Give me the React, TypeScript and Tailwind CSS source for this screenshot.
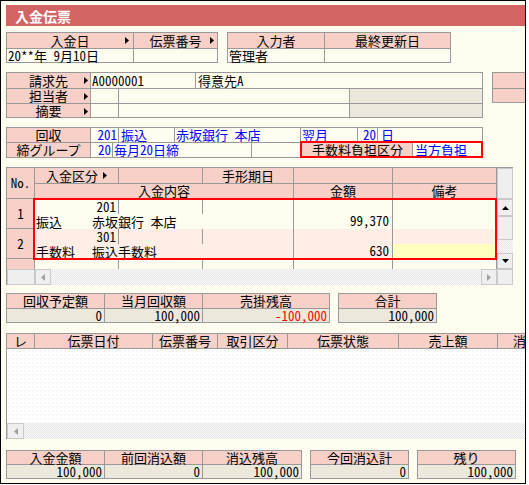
import React from "react";

type Kids = { children?: React.ReactNode };

// small solid triangle used for the dropdown markers and scrollbar buttons
function Tri({
  dir = "right",
  color = "#000000",
  className = "",
}: {
  dir?: "right" | "left" | "up" | "down";
  color?: string;
  className?: string;
}) {
  const horiz = dir === "right" || dir === "left";
  const w = horiz ? 4 : 7;
  const h = horiz ? 7 : 4;
  const d =
    dir === "right"
      ? "M0 0L4 3.5L0 7Z"
      : dir === "left"
      ? "M4 0L0 3.5L4 7Z"
      : dir === "up"
      ? "M0 4L3.5 0L7 4Z"
      : "M0 0L7 0L3.5 4Z";
  return (
    <svg width={w} height={h} viewBox={`0 0 ${w} ${h}`} className={className}>
      <path d={d} fill={color} />
    </svg>
  );
}

// grid cell: draws its own right and bottom rule, the group box draws left/top
function C({ className = "", children }: { className?: string } & Kids) {
  return (
    <div
      className={`flex shrink-0 items-center whitespace-nowrap border-r border-b border-[#999999] ${className}`}
    >
      {children}
    </div>
  );
}

function Label({ h, arrow, children }: { h: string; arrow?: boolean } & Kids) {
  return (
    <C className={`relative w-[84px] justify-center bg-[#F7D0C8] ${h}`}>
      {children}
      {arrow && <Tri className="absolute right-[2px] top-[4px]" />}
    </C>
  );
}

function Btn({ className = "", children }: { className?: string } & Kids) {
  return (
    <div
      className={`flex shrink-0 items-center justify-center border border-[#C9C9C9] bg-[#EFEFEF] ${className}`}
    >
      {children}
    </div>
  );
}

const track =
  "bg-[repeating-conic-gradient(#E6E6E6_0_25%,#FAFAFA_0_50%)] bg-[length:2px_2px]";

function SlipRow({
  no,
  code,
  kind,
  content,
  amount,
  tint,
  memo,
}: {
  no: string;
  code: string;
  kind: string;
  content: string;
  amount: string;
  tint: string;
  memo: string;
}) {
  return (
    <div className="flex h-[30px]">
      <div className="flex w-[28px] shrink-0 items-center justify-center border-r border-b border-[#999999] bg-[#F7D0C8]">
        {no}
      </div>
      <div className={`flex w-[259px] shrink-0 flex-col border-r border-[#999999] ${tint}`}>
        <div className="flex h-[15px]">
          <div className="flex w-[84px] items-center justify-end border-r border-[#999999] pr-[2px]">
            {code}
          </div>
          <div className="w-[84px] border-r border-[#999999]" />
        </div>
        <div className="flex h-[15px] items-center whitespace-nowrap pl-[1px]">
          <span className="w-[56px] shrink-0">{kind}</span>
          <span>{content}</span>
        </div>
      </div>
      <div
        className={`flex w-[99px] shrink-0 items-end justify-end border-r border-[#999999] pr-[3px] pb-[1px] ${tint}`}
      >
        {amount}
      </div>
      <div className={`flex w-[104px] shrink-0 flex-col border-r border-[#999999] ${tint}`}>
        <div className="h-[15px]" />
        <div className={`h-[15px] ${memo}`} />
      </div>
    </div>
  );
}

type Col = { label: string; value: string; w: string; red?: boolean };

function SumBox({ cols, hh }: { cols: Col[]; hh: string }) {
  return (
    <div className="flex shrink-0 flex-col border-l border-t border-[#999999]">
      <div className="flex">
        {cols.map((c) => (
          <C key={c.label} className={`${c.w} ${hh} justify-center bg-[#F7D0C8]`}>
            {c.label}
          </C>
        ))}
      </div>
      <div className="flex">
        {cols.map((c) => (
          <C
            key={c.label}
            className={`${c.w} h-[14px] justify-end bg-[#ECE9DC] pr-[2px] ${
              c.red ? "text-[#FF0000]" : ""
            }`}
          >
            {c.value}
          </C>
        ))}
      </div>
    </div>
  );
}

export default function App() {
  return (
    <div className="h-[485px] w-[529px] bg-white">
      <div className="h-[484px] w-[526px] overflow-hidden border border-black bg-[#FFFCF0] font-['Noto_Sans_CJK_JP',sans-serif] text-[13px] leading-[14px] text-black [font-feature-settings:'hwid']">
        <div className="flex flex-col pl-[5px] pt-[4px]">
          {/* title bar */}
          <div className="flex h-[21px] items-center bg-[#D36464] pl-[9px] text-[14px] font-bold text-white">
            入金伝票
          </div>

          {/* date / slip number / operator */}
          <div className="mt-[6px] flex">
            <div className="flex flex-col border-l border-t border-[#999999]">
              <div className="flex">
                <C className="relative h-[16px] w-[127px] justify-center bg-[#F7D0C8]">
                  入金日
                  <Tri className="absolute right-[4px] top-[4px]" />
                </C>
                <C className="relative h-[16px] w-[84px] justify-center bg-[#F7D0C8]">
                  伝票番号
                  <Tri className="absolute right-[3px] top-[4px]" />
                </C>
              </div>
              <div className="flex">
                <C className="h-[14px] w-[127px] pl-[1px]">20**年 9月10日</C>
                <C className="h-[14px] w-[84px]" />
              </div>
            </div>
            <div className="ml-[9px] flex flex-col border-l border-t border-[#999999]">
              <div className="flex">
                <C className="h-[16px] w-[97px] justify-center bg-[#F7D0C8]">入力者</C>
                <C className="h-[16px] w-[126px] justify-center bg-[#F7D0C8]">最終更新日</C>
              </div>
              <div className="flex">
                <C className="h-[14px] w-[97px] pl-[1px]">管理者</C>
                <C className="h-[14px] w-[126px]" />
              </div>
            </div>
          </div>

          {/* customer block */}
          <div className="mt-[9px] flex items-start">
            <div className="flex w-[477px] shrink-0 flex-col border-l border-t border-[#999999]">
              <div className="flex">
                <Label h="h-[16px]" arrow>
                  請求先
                </Label>
                <C className="h-[16px] w-[105px] pl-[1px]">A0000001</C>
                <C className="h-[16px] w-[287px] pl-[2px]">得意先A</C>
              </div>
              <div className="flex">
                <Label h="h-[15px]" arrow>
                  担当者
                </Label>
                <C className="h-[15px] w-[28px]" />
                <C className="h-[15px] w-[231px]" />
                <C className="h-[15px] w-[133px] bg-[#ECE9DC]" />
              </div>
              <div className="flex">
                <Label h="h-[14px]" arrow>
                  摘要
                </Label>
                <C className="h-[14px] w-[28px]" />
                <C className="h-[14px] w-[231px]" />
                <C className="h-[14px] w-[133px] bg-[#ECE9DC]" />
              </div>
            </div>
            <div className="ml-[9px] flex shrink-0 flex-col border-l border-t border-[#999999]">
              <C className="h-[16px] w-[40px] bg-[#F7D0C8]" />
              <C className="h-[14px] w-[40px] bg-[#F7D0C8]" />
            </div>
          </div>

          {/* collection terms */}
          <div className="mt-[9px] flex w-[477px] flex-col border-l border-t border-[#999999] text-[#0000FF]">
            <div className="flex">
              <Label h="h-[15px]">
                <span className="text-black">回収</span>
              </Label>
              <C className="h-[15px] w-[28px] justify-end pr-[1px]">201</C>
              <C className="h-[15px] w-[56px] pl-[2px]">振込</C>
              <C className="h-[15px] w-[126px] pl-[1px]">赤坂銀行 本店</C>
              <C className="h-[15px] w-[57px] pl-[1px]">翌月</C>
              <C className="h-[15px] w-[20px] justify-end pr-[1px]">20</C>
              <C className="h-[15px] w-[105px] pl-[3px]">日</C>
            </div>
            <div className="flex">
              <Label h="h-[15px]">
                <span className="text-black">締グループ</span>
              </Label>
              <C className="h-[15px] w-[22px] justify-end pr-[1px]">20</C>
              <C className="h-[15px] w-[139px] pl-[1px]">毎月20日締</C>
              <C className="h-[15px] w-[49px]" />
              <C className="relative h-[15px] w-[182px]">
                <div className="flex h-full w-[112px] items-center justify-center border-r border-[#999999] bg-[#F7D0C8] pl-[2px] text-black">
                  手数料負担区分
                </div>
                <span className="pl-[2px]">当方負担</span>
                <div className="pointer-events-none absolute left-[-1px] top-[-2px] h-[17px] w-[183px] border-2 border-[#FF0000]" />
              </C>
            </div>
          </div>

          {/* detail lines */}
          <div className="mt-[9px] flex w-[507px] flex-col border-l border-t border-[#999999]">
            <div className="flex">
              <div className="flex w-[490px] shrink-0 flex-col">
                <div className="flex">
                  <C className="h-[31px] w-[28px] justify-center bg-[#F7D0C8]">No.</C>
                  <div className="flex flex-col">
                    <div className="flex">
                      <C className="h-[16px] w-[84px] justify-center gap-[5px] bg-[#F7D0C8]">
                        入金区分
                        <Tri />
                      </C>
                      <C className="h-[16px] w-[84px] bg-[#F7D0C8]" />
                      <C className="h-[16px] w-[91px] justify-center bg-[#F7D0C8]">手形期日</C>
                      <C className="h-[16px] w-[99px] bg-[#F7D0C8]" />
                      <C className="h-[16px] w-[104px] bg-[#F7D0C8]" />
                    </div>
                    <div className="flex">
                      <C className="h-[15px] w-[259px] justify-center bg-[#F7D0C8]">入金内容</C>
                      <C className="h-[15px] w-[99px] justify-center bg-[#F7D0C8]">金額</C>
                      <C className="h-[15px] w-[104px] justify-center bg-[#F7D0C8]">備考</C>
                    </div>
                  </div>
                </div>
                <div className="relative">
                  <SlipRow
                    no="1"
                    code="201"
                    kind="振込"
                    content="赤坂銀行 本店"
                    amount="99,370"
                    tint="bg-[#FFFCF0]"
                    memo=""
                  />
                  <SlipRow
                    no="2"
                    code="301"
                    kind="手数料"
                    content="振込手数料"
                    amount="630"
                    tint="bg-[#FFEEE6]"
                    memo="bg-[#FFFFC0]"
                  />
                  <div className="pointer-events-none absolute left-[26px] top-[-1px] h-[62px] w-[464px] border-2 border-[#FF0000]" />
                </div>
                <div className="flex h-[10px]">
                  <div className="w-[28px] shrink-0 border-r border-[#999999] bg-[#F7D0C8]" />
                  <div className="w-[84px] shrink-0 border-r border-[#999999]" />
                  <div className="w-[84px] shrink-0 border-r border-[#999999]" />
                  <div className="w-[91px] shrink-0 border-r border-[#999999]" />
                  <div className="w-[99px] shrink-0 border-r border-[#999999]" />
                  <div className="w-[104px] shrink-0 border-r border-[#999999]" />
                </div>
              </div>
              {/* vertical scrollbar */}
              <div className="flex w-[16px] shrink-0 flex-col">
                <Btn className="h-[31px] w-[16px]" />
                <Btn className="h-[17px] w-[16px]">
                  <Tri dir="up" />
                </Btn>
                <Btn className="h-[24px] w-[16px]" />
                <div className={`h-[13px] w-[16px] ${track}`} />
                <Btn className="h-[16px] w-[16px]">
                  <Tri dir="down" />
                </Btn>
              </div>
            </div>
            {/* horizontal scrollbar */}
            <div className="flex h-[16px]">
              <Btn className="h-[16px] w-[28px]" />
              <Btn className="h-[16px] w-[16px]">
                <Tri dir="left" color="#A0A0A0" />
              </Btn>
              <div className={`h-[16px] w-[430px] ${track}`} />
              <Btn className="h-[16px] w-[16px]">
                <Tri dir="right" color="#A0A0A0" />
              </Btn>
              <Btn className="h-[16px] w-[16px]" />
            </div>
          </div>

          {/* balances */}
          <div className="mt-[8px] flex">
            <SumBox
              hh="h-[15px]"
              cols={[
                { label: "回収予定額", value: "0", w: "w-[98px]" },
                { label: "当月回収額", value: "100,000", w: "w-[98px]" },
                { label: "売掛残高", value: "-100,000", w: "w-[127px]", red: true },
              ]}
            />
            <div className="ml-[8px]">
              <SumBox hh="h-[15px]" cols={[{ label: "合計", value: "100,000", w: "w-[98px]" }]} />
            </div>
          </div>

          {/* matching list */}
          <div className="mt-[10px] flex flex-col border-l border-t border-[#999999]">
            <div className="flex">
              <C className="h-[15px] w-[28px] justify-center bg-[#F7D0C8]">レ</C>
              <C className="h-[15px] w-[118px] justify-center bg-[#F7D0C8]">伝票日付</C>
              <C className="h-[15px] w-[65px] justify-center bg-[#F7D0C8]">伝票番号</C>
              <C className="h-[15px] w-[70px] justify-center bg-[#F7D0C8]">取引区分</C>
              <C className="h-[15px] w-[111px] justify-center bg-[#F7D0C8]">伝票状態</C>
              <C className="h-[15px] w-[99px] justify-center bg-[#F7D0C8]">売上額</C>
              <C className="h-[15px] w-[44px] justify-center bg-[#F7D0C8]">消</C>
            </div>
            <div className="h-[74px] bg-white bg-[radial-gradient(circle,#ECECEC_0.6px,transparent_0.8px)] bg-[length:4px_4px]" />
            <div className="flex h-[16px]">
              <Btn className="h-[16px] w-[17px]">
                <Tri dir="left" color="#A0A0A0" />
              </Btn>
              <div className={`h-[16px] flex-1 ${track}`} />
            </div>
          </div>

          {/* totals */}
          <div className="mt-[11px] flex">
            <SumBox
              hh="h-[14px]"
              cols={[
                { label: "入金金額", value: "100,000", w: "w-[98px]" },
                { label: "前回消込額", value: "0", w: "w-[98px]" },
                { label: "消込残高", value: "100,000", w: "w-[99px]" },
              ]}
            />
            <div className="ml-[8px]">
              <SumBox hh="h-[14px]" cols={[{ label: "今回消込計", value: "0", w: "w-[98px]" }]} />
            </div>
            <div className="ml-[8px]">
              <SumBox hh="h-[14px]" cols={[{ label: "残り", value: "100,000", w: "w-[98px]" }]} />
            </div>
          </div>
        </div>
      </div>
    </div>
  );
}
